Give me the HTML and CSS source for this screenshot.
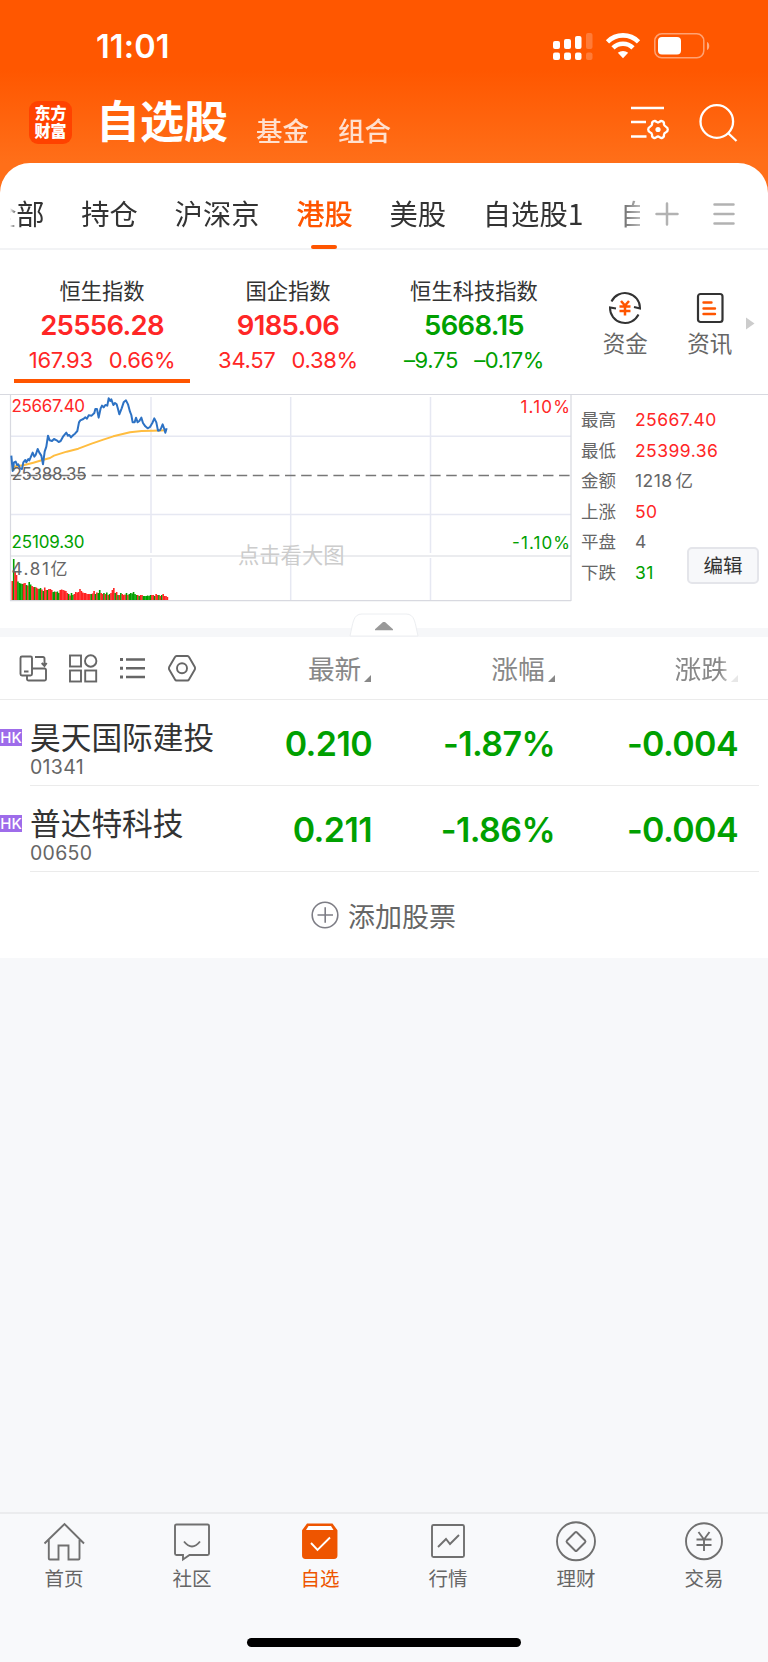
FILE: index.html
```
<!DOCTYPE html>
<html lang="zh-CN">
<head>
    <meta charset="UTF-8">
    <meta name="viewport" content="width=device-width, initial-scale=1.0">
    <title>自选股</title>
    <link rel="stylesheet" href="styles.css">
</head>
<body>
    <header class="top">
        <div class="status">
            <span class="time">11:01</span>
            <svg class="status-icons" width="152" height="28" viewBox="0 0 152 28" fill="#fff">
                <rect x="0" y="9" width="7" height="8" rx="2"/>
                <rect x="11" y="7" width="7" height="10" rx="2"/>
                <rect x="22" y="4" width="6.5" height="13" rx="2"/>
                <rect x="33" y="1" width="6.5" height="16" rx="2" opacity=".22"/>
                <rect x="0" y="20.5" width="7" height="7.5" rx="2"/>
                <rect x="11" y="20.5" width="7" height="7.5" rx="2"/>
                <rect x="22" y="20.5" width="6.5" height="7.5" rx="2"/>
                <rect x="33" y="20.5" width="6.5" height="7.5" rx="2" opacity=".22"/>
                <g fill="none" stroke="#fff" stroke-width="4.6">
                    <path d="M54.500 9.800a22 22 0 0 1 31 0"/>
                    <path d="M60 15.800a14.300 14.300 0 0 1 20 0"/>
                </g>
                <path d="M64.800 20.800a8 8 0 0 1 10.400 0L70 26.300z"/>
                <rect x="101.8" y="1.800" width="49" height="24" rx="7" fill="none" stroke="#fff" stroke-width="1.5" opacity=".45"/>
                <rect x="105" y="5" width="23" height="17.5" rx="4"/>
            </svg>
            <svg width="4" height="10" viewBox="0 0 4 10" fill="#fff" opacity=".5"><path d="M1 1c3 1 3 7 0 8z"/></svg>
        </div>
        <div class="title-bar">
            <div class="logo">东方<br>财富</div>
            <h1>自选股</h1>
            <span class="sub">基金</span>
            <span class="sub">组合</span>
            <svg class="custom" width="39" height="36" viewBox="0 0 39 36" fill="none" stroke="#fff" stroke-width="2.6">
                <path d="M0 3h33M0 17h15M0 31.500h15.500"/>
                <path d="M22.500 16.300q1.700-.9 3 .6q1.500 1.100 3 0q1.300-1.500 3-.6q1.900 1 1.400 2.900q.2 1.900 2 2.500q1.900.8 1.900 2.800t-1.900 2.800q-1.800.6-2 2.500q.5 1.900-1.400 2.900q-1.700.9-3-.6q-1.500-1.100-3 0q-1.300 1.500-3 .6q-1.900-1-1.400-2.900q-.2-1.900-2-2.500q-1.900-.8-1.900-2.800t1.900-2.800q1.800-.6 2-2.500q-.5-1.900 1.400-2.900z" stroke-width="2.3"/>
                <circle cx="27" cy="24.500" r="2.6" fill="#fff" stroke="none"/>
            </svg>
            <svg class="search" width="39" height="39" viewBox="0 0 39 39" fill="none" stroke="#fff" stroke-width="2.3">
                <circle cx="17.800" cy="17.500" r="16.3"/>
                <path d="M29 29l8.500 8"/>
            </svg>
        </div>
    </header>

    <main class="sheet">
        <nav class="tabs">
            <div class="tab-list">
                <span>全部</span>
                <span>持仓</span>
                <span>沪深京</span>
                <span class="active">港股</span>
                <span>美股</span>
                <span>自选股1</span>
                <span>自</span>
            </div>
            <svg class="tab-tools" width="80" height="24" viewBox="0 0 80 24" stroke="#b2b2b2" stroke-width="2.5" stroke-linecap="round">
                <path d="M1.500 12h21M12 1.500v21M59.500 2.500h19M59.500 12h19M59.500 21.500h19"/>
            </svg>
        </nav>

        <section class="indices">
            <div class="index up selected">
                <h2>恒生指数</h2>
                <strong>25556.28</strong>
                <p><span>167.93</span><span>0.66%</span></p>
            </div>
            <div class="index up">
                <h2>国企指数</h2>
                <strong>9185.06</strong>
                <p><span>34.57</span><span>0.38%</span></p>
            </div>
            <div class="index down">
                <h2>恒生科技指数</h2>
                <strong>5668.15</strong>
                <p><span>–9.75</span><span>–0.17%</span></p>
            </div>
            <div class="shortcut">
                <svg width="34" height="34" viewBox="0 0 34 34" fill="none" stroke="#333" stroke-width="2">
                    <path d="M3.500 10.500A15 15 0 0 1 32 17v.5L26 16M30.500 23.500A15 15 0 0 1 2 16.500L8 17.500"/>
                    <path d="M13 10l4 4.500 4-4.500M11.500 15.500h11M11.500 20h11M17 14.500v10" stroke="#ff5500" stroke-width="2.5"/>
                </svg>
                <span>资金</span>
            </div>
            <div class="shortcut">
                <svg width="34" height="34" viewBox="0 0 34 34" fill="none" stroke="#333" stroke-width="2.2">
                    <rect x="5" y="3" width="24.5" height="28" rx="2.5"/>
                    <path d="M10.500 11.500h8M10.500 17.500h11.500M10.500 23h11.500" stroke="#ff5500" stroke-width="2.4" stroke-linecap="round"/>
                </svg>
                <span>资讯</span>
            </div>
            <svg class="more" width="9" height="13" viewBox="0 0 9 13" fill="#ccc"><path d="M0 .5l8.500 6-8.500 6z"/></svg>
        </section>

        <section class="market">
            <svg class="chart" width="573" height="208" viewBox="0 0 573 208">
                <g fill="none" stroke="#e6e8f2" stroke-width="1.5">
                    <path d="M11 42.300H571M11 120.600H571"/>
                    <path d="M151 3v156M290.700 3v156M430.500 3v156M151 164v43M290.700 164v43M430.500 164v43"/>
                </g>
                <path d="M571 206.700H10.500V.700M571 .700V207M10 162H571" fill="none" stroke="#d8d9e0" stroke-width="1.2"/>
                <text class="watermark" x="238" y="169">点击看大图</text>
                <path d="M11 81.500H571" stroke="#777" stroke-width="1.4" stroke-dasharray="10.5 5.62"/>
                <g transform="translate(0 -9) scale(.3333)" fill="none" stroke-linejoin="round">
                    <polyline stroke="#ffbd40" stroke-width="6" points="36,245 70,241 100,233 125,226 150,219 162,212 200,200 235,191 275,176 310,164 340,154 365,148 390,142 425,138 460,137 500,136"/>
                    <polyline stroke="#2d72c4" stroke-width="6" points="34,212 38,258 42,232 47,230 51,240 55,238 60,250 66,252 70,232 76,225 79,232 85,222 88,226 98,203 103,215 107,210 113,192 118,203 124,212 129,238 134,200 139,185 144,152 149,166 156,168 162,162 170,166 176,171 182,168 189,155 199,143 204,152 208,150 213,157 220,150 225,146 232,138 237,112 241,106 250,102 256,97 261,101 266,91 275,92 283,84 286,72 291,72 296,98 302,70 306,62 311,67 316,60 322,62 326,40 331,48 334,43 340,60 345,54 350,58 354,72 358,88 365,70 371,52 378,46 384,58 390,80 394,90 398,112 404,112 408,98 413,112 418,108 424,98 429,114 436,124 443,130 450,126 457,114 463,100 469,112 474,137 480,136 484,128 488,118 493,132 496,143 500,130"/>
                </g>
                <g id="volume"></g>
                <g class="axis">
                    <text class="up" x="11.5" y="17.500" textLength="73.5">25667.40</text>
                    <text x="11.5" y="85.500" textLength="75">25388.35</text>
                    <text class="down" x="11.5" y="153.500" textLength="73">25109.30</text>
                    <text x="11.5" y="181" textLength="56">4.81亿</text>
                    <text class="up" x="570" y="18.500" text-anchor="end" textLength="49.5">1.10%</text>
                    <text class="down" x="570" y="154.500" text-anchor="end" textLength="58">-1.10%</text>
                </g>
            </svg>
            <dl class="stats">
                <dt>最高</dt><dd class="up">25667.40</dd>
                <dt>最低</dt><dd class="up">25399.36</dd>
                <dt>金额</dt><dd>1218<span class="unit">亿</span></dd>
                <dt>上涨</dt><dd class="up">50</dd>
                <dt>平盘</dt><dd>4</dd>
                <dt>下跌</dt><dd class="down">31</dd>
            </dl>
            <button class="edit" type="button">编辑</button>
        </section>

        <div class="divider">
            <svg class="collapse" width="70" height="24" viewBox="0 0 70 24">
                <path d="M1 23C4 10 4 1 13 1H57C66 1 66 10 69 23z" fill="#fff" stroke="#eceef1"/>
                <path d="M26 17.200v-1l8-7.200h2l8 7.200v1z" fill="#999"/>
            </svg>
        </div>

        <section class="toolbar">
            <div class="views">
                <svg width="30" height="30" viewBox="0 0 30 30">
                    <rect x="2.500" y="2.500" width="11.5" height="19" rx="1.5"/>
                    <path d="M6 17.500h4.500M17 3h8a1.500 1.500 0 0 1 1.500 1.500V11M23.700 9l2.800 3 2.200-3M14 14.500h12.500a1.500 1.500 0 0 1 1.500 1.500v9a1.500 1.500 0 0 1-1.500 1.500H10.500A1.500 1.500 0 0 1 9 25v-3.500"/>
                </svg>
                <svg width="30" height="30" viewBox="0 0 30 30">
                    <rect x="2" y="1.500" width="11" height="11"/><circle cx="22.700" cy="7" r="5.7"/>
                    <rect x="2" y="16.500" width="11" height="11"/><rect x="17.200" y="16.500" width="11" height="11"/>
                </svg>
                <svg width="30" height="30" viewBox="0 0 30 30">
                    <path d="M8 5.500h19M8 14.300h19M8 23h19" stroke-width="2.4"/>
                    <path d="M2 5.500h3M2 14.300h3M2 23h3" stroke-width="3"/>
                </svg>
                <svg width="30" height="30" viewBox="0 0 30 30">
                    <path d="M8.500 2h11q1 0 1.500 1l5.800 10q.5 1.300 0 2.600L21 25.500q-.5 1-1.500 1h-11q-1 0-1.500-1L1.200 15.600q-.5-1.300 0-2.600L7 3q.5-1 1.500-1z"/>
                    <circle cx="14" cy="14.300" r="5"/>
                </svg>
            </div>
            <span class="sort">最新</span>
            <span class="sort">涨幅</span>
            <span class="sort fade">涨跌</span>
        </section>

        <section class="stocks">
            <div class="stock">
                <span class="market-tag">HK</span>
                <div class="name"><h3>昊天国际建投</h3><small>01341</small></div>
                <b>0.210</b><b>-1.87%</b><b>-0.004</b>
            </div>
            <div class="stock">
                <span class="market-tag">HK</span>
                <div class="name"><h3>普达特科技</h3><small>00650</small></div>
                <b>0.211</b><b>-1.86%</b><b>-0.004</b>
            </div>
        </section>

        <div class="add">
            <svg width="28" height="28" viewBox="0 0 28 28" fill="none" stroke="#7d7d85" stroke-width="1.6">
                <circle cx="14" cy="14" r="12.8"/><path d="M6.500 14h15.500M14.200 6.200v15.600"/>
            </svg>
            <span>添加股票</span>
        </div>
    </main>

    <footer class="bottom">
        <nav class="bottom-nav">
            <a>
                <svg width="42" height="42" viewBox="0 0 42 42"><path d="M1.500 22.500L21.500 3l19.500 19.500M5.800 19v18.500q0 1 1 1H15.500V24.500h10V38.500H35.500q1 0 1-1V19"/></svg>
                <span>首页</span>
            </a>
            <a>
                <svg width="42" height="42" viewBox="0 0 42 42"><path d="M5.500 3.500h31q1.500 0 1.500 1.500v27.500q0 1.500-1.500 1.500H18.500l-6.500 4.500v-4.500H5.500Q4 34 4 32.500V5q0-1.500 1.500-1.500zM13 20.500q8 10 16 0"/></svg>
                <span>社区</span>
            </a>
            <a class="active">
                <svg width="42" height="42" viewBox="0 0 42 42">
                    <path d="M4 9.500L8.500 3.500h24.500L37.500 9.500V34.500q0 2.500-2.500 2.500H6.500Q4 37 4 34.500z" fill="#ee5500"/>
                    <path d="M9.500 5h22.500l2.500 4H7z" fill="#fff" stroke="none"/>
                    <path d="M12 22l6.500 7L31 16.500" stroke="#fff"/>
                </svg>
                <span>自选</span>
            </a>
            <a>
                <svg width="42" height="42" viewBox="0 0 42 42"><rect x="5" y="4" width="32" height="32" rx="1.5"/><path d="M11 26l8-8 4 5 9-9"/></svg>
                <span>行情</span>
            </a>
            <a>
                <svg width="42" height="42" viewBox="0 0 42 42"><circle cx="21" cy="20.300" r="19"/><path d="M20 11.500q1-1 2 0l8 8q1 1 0 2l-8 8q-1 1-2 0l-8-8q-1-1 0-2z"/></svg>
                <span>理财</span>
            </a>
            <a>
                <svg width="42" height="42" viewBox="0 0 42 42"><circle cx="21" cy="20.300" r="18"/><path d="M15.500 11l5.500 7.500L26.500 11M13.500 18.500h15M13.500 24h15M21 18.500V30"/></svg>
                <span>交易</span>
            </a>
        </nav>
        <div class="home-bar"></div>
    </footer>

    <script>
        // Volume per minute, g = falling, r = rising
        const heights = [19, 41, 28, 25, 18.5, 17, 16.5, 16, 16.5, 17, 15, 14.5, 18, 15.5, 14, 13, 13, 12.5, 11.5, 11, 12, 10.5, 9, 12.5, 10, 10, 11, 11, 10, 8, 8.5, 8, 8.5, 7, 10, 10.5, 10, 9.5, 9, 7, 6, 4.5, 7, 5, 6, 8, 7.5, 8, 11, 9, 7.5, 7, 7, 6, 6, 6, 6, 6.5, 9, 6, 7.5, 7, 10, 7, 6, 7, 6, 7.5, 5, 6, 7, 10, 12, 7, 8, 5, 5, 7, 6, 5, 5.5, 7, 5, 6, 7, 6.5, 8, 6, 5, 5, 4, 5, 5, 4, 4, 4, 4.5, 4, 5, 5, 5, 4, 6, 5, 5, 4, 5, 6, 4, 4, 3];
        const colors = "rgrrggggrrgrggrrgrrggrgrrgrrrggrggrrrrrrgrggrrrrrrrrrrrrgrrgrggrrgrgrgrrrgrgrgrrrgrggggggrgrrggggggrrgrrgrgrrrr";
        const volume = document.getElementById("volume");

        volume.innerHTML = heights.map(function(h, i) {
            const fill = colors[i] === "g" ? "#00a000" : "#ff2222";
            return `<rect x="${11.5 + i * 1.41}" y="${206 - h}" width="1.6" height="${h}" fill="${fill}"/>`;
        }).join("");
    </script>
</body>
</html>
```
FILE: styles.css
```
* {
    box-sizing: border-box;
}

body {
    margin: 0;
    height: 1662px;
    display: flex;
    flex-direction: column;
    font-family: Inter, "Noto Sans CJK SC", sans-serif;
    background-color: #f7f8fa;
    color: #333;
    overflow: hidden;
}

h1, h2, h3, p, dl, dd {
    margin: 0;
    font-weight: normal;
}

svg {
    display: block;
    flex: none;
}

.up {
    color: #ff2626;
    fill: #ff2626;
}

.down {
    color: #00a000;
    fill: #00a000;
}

/* header */
.top {
    height: 200px;
    background: linear-gradient(#ff5700 70px, #ff6f19 163px);
    color: #fff;
}

.status {
    display: flex;
    align-items: center;
    height: 92px;
    padding: 0 58px 0 96px;
}

.time {
    font-size: 32.5px;
    font-weight: 600;
    letter-spacing: 0.1px;
}

.status-icons {
    margin: 0 1px 0 auto;
}

.title-bar {
    display: flex;
    align-items: center;
    height: 62px;
    padding: 0 30px 0 29px;
}

.logo {
    width: 43px;
    height: 43px;
    margin-top: -1px;
    padding-top: 3px;
    border-radius: 9px;
    background-color: #ff4200;
    font-size: 16px;
    font-weight: 900;
    line-height: 18px;
    text-align: center;
}

.title-bar h1 {
    margin: -2px 28px 0 24px;
    font-size: 44px;
    font-weight: 700;
    line-height: 60px;
}

.sub {
    margin: 12px 29px 0 0;
    font-size: 26.5px;
    font-weight: 500;
    opacity: 0.8;
}

.custom {
    margin: 0 29px 0 auto;
}

/* white sheet */
.sheet {
    margin-top: -37px;
    border-radius: 30px 30px 0 0;
    background-color: #fff;
}

.tabs {
    display: flex;
    align-items: center;
    height: 87px;
    border-bottom: 2px solid #f2f3f5;
}

.tab-list {
    display: flex;
    gap: 36.7px;
    width: 630px;
    height: 87px;
    margin: 2px 0 0 10px;
    overflow: hidden;
    font-family: "Noto Sans CJK SC", sans-serif;
    font-size: 28.3px;
    line-height: 100px;
    white-space: nowrap;
    -webkit-mask-image: linear-gradient(90deg, transparent, #000 7px, #000 600px, transparent 645px);
    mask-image: linear-gradient(90deg, transparent, #000 7px, #000 600px, transparent 645px);
}

.tab-list span:first-child {
    margin-left: -22px;
}

.tab-list .active {
    display: flex;
    flex-direction: column;
    align-items: center;
    color: #ff5500;
    font-weight: 500;
}

.tab-list .active::after {
    content: "";
    width: 26px;
    height: 4px;
    margin-top: -18px;
    border-radius: 2px;
    background-color: #ff5500;
}

.tab-tools {
    margin: 16px 0 0 15px;
}

/* indices */
.indices {
    display: flex;
    height: 144px;
    padding-left: 14px;
}

.index {
    width: 176px;
    height: 133px;
    margin-right: 10px;
    padding-top: 25px;
    text-align: center;
    white-space: nowrap;
}

.index.selected {
    border-bottom: 4px solid #ff5500;
}

.index h2 {
    color: #333;
    font-size: 21.3px;
    line-height: 32px;
}

.index strong {
    display: block;
    font-size: 27.5px;
    font-weight: 600;
    line-height: 37px;
    letter-spacing: -0.7px;
}

.index p {
    display: flex;
    justify-content: center;
    gap: 16px;
    font-size: 22px;
    line-height: 32px;
    letter-spacing: -0.3px;
}

.shortcut {
    display: flex;
    flex-direction: column;
    align-items: center;
    width: 84.5px;
    padding-top: 41px;
    color: #666;
    font-size: 22.5px;
    line-height: 38px;
}

.index + .shortcut {
    margin-left: 11px;
}

.more {
    margin: 67px 0 0 -6px;
}

/* chart and stats */
.market {
    position: relative;
    display: flex;
    height: 234px;
    border-top: 1px solid #d8d9e0;
}

.chart {
    margin-top: -1px;
}

.axis text {
    font-size: 17px;
}

.axis text:not([class]) {
    fill: #666;
}

.watermark {
    fill: #ccc;
    font-size: 21.3px;
}

.stats {
    display: grid;
    grid-template-columns: 54px auto;
    grid-auto-rows: 30.5px;
    align-content: start;
    padding: 10px 0 0 8px;
    color: #666;
    font-size: 17.5px;
    line-height: 30px;
}

.stats dd {
    letter-spacing: 0.45px;
}

.unit {
    margin-left: 3px;
}

.edit {
    position: absolute;
    right: 9px;
    top: 152px;
    width: 72px;
    height: 37px;
    padding: 0;
    border: 2px solid #e4e5ea;
    border-radius: 5px;
    background-color: #f7f8fa;
    color: #333;
    font-family: inherit;
    font-size: 19.5px;
    line-height: 30px;
}

.divider {
    display: flex;
    justify-content: center;
    align-items: flex-end;
    height: 9px;
    background-color: #f6f7f9;
}

.collapse {
    position: relative;
}

/* list */
.toolbar {
    display: flex;
    align-items: center;
    height: 63px;
    padding-top: 1px;
    border-bottom: 1px solid #ebebeb;
}

.views {
    display: flex;
    gap: 20px;
    width: 188px;
    padding-left: 18px;
}

.views svg {
    fill: none;
    stroke: #666;
    stroke-width: 1.9;
}

.sort {
    display: flex;
    align-items: flex-end;
    justify-content: flex-end;
    width: 183.3px;
    color: #888;
    font-size: 26.7px;
    line-height: 40px;
}

.sort::after {
    content: "";
    margin: 0 0 7px 3px;
    border-left: 7px solid transparent;
    border-bottom: 7px solid #888;
}

.sort.fade {
    -webkit-mask-image: linear-gradient(90deg, #000 165px, rgba(0, 0, 0, 0.2) 177px);
    mask-image: linear-gradient(90deg, #000 165px, rgba(0, 0, 0, 0.2) 177px);
}

.stock {
    display: flex;
    align-items: center;
    height: 86px;
    background: linear-gradient(#ebebeb, #ebebeb) 30px 100% / 729px 1px no-repeat;
}

.market-tag {
    width: 22px;
    height: 17px;
    margin-top: -12px;
    background-color: #9e6cea;
    color: #fff;
    font-size: 15px;
    font-weight: 500;
    line-height: 17px;
    text-align: center;
}

.name {
    width: 167px;
    padding: 11px 0 0 8px;
    white-space: nowrap;
}

.name h3 {
    font-size: 30.7px;
    line-height: 36px;
}

.name small {
    display: block;
    color: #666;
    font-size: 19.5px;
    line-height: 22px;
    letter-spacing: 0.3px;
}

.stock b {
    width: 183px;
    color: #00a000;
    font-size: 34px;
    font-weight: 600;
    text-align: right;
    letter-spacing: -0.6px;
}

.add {
    display: flex;
    justify-content: center;
    align-items: center;
    gap: 9px;
    height: 86px;
    padding-right: 1px;
    color: #666;
    font-size: 27px;
}

/* bottom */
.bottom {
    margin-top: auto;
    height: 150px;
    border-top: 2px solid #ebecee;
    background-color: #f8f9fb;
}

.bottom-nav {
    display: flex;
    height: 124px;
}

.bottom-nav a {
    display: flex;
    flex-direction: column;
    align-items: center;
    width: 128px;
    padding-top: 7px;
    color: #666;
    font-size: 19.5px;
    line-height: 32px;
}

.bottom-nav svg {
    fill: none;
    stroke: #707070;
    stroke-width: 1.9;
}

.bottom-nav .active {
    color: #ee5500;
}

.bottom-nav .active svg {
    stroke: #ee5500;
}

.home-bar {
    width: 274px;
    height: 9px;
    margin: 0 auto;
    border-radius: 5px;
    background-color: #000;
}
```
